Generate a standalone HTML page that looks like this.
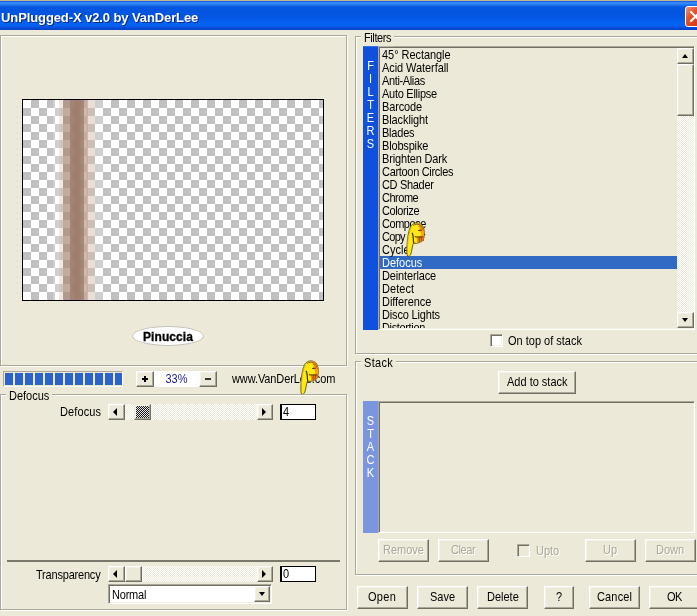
<!DOCTYPE html>
<html>
<head>
<meta charset="utf-8">
<title>UnPlugged-X v2.0 by VanDerLee</title>
<style>
html,body{margin:0;padding:0;}
body{width:697px;height:616px;overflow:hidden;background:#ece9d8;position:relative;
  font-family:"Liberation Sans",sans-serif;font-size:11px;color:#000;}
div,span{position:absolute;box-sizing:border-box;}
.t{white-space:nowrap;line-height:13px;height:13px;}
.t,.li,.vl{transform:translateY(1px) scaleY(1.08);transform-origin:0 10px;will-change:transform;}
#tt{will-change:transform;transform:scaleY(1.05);transform-origin:0 0;}
.bt{position:relative;display:inline-block;line-height:13px;vertical-align:middle;margin-top:-2px;transform:scaleY(1.08);transform-origin:50% 10px;will-change:transform;}
/* title bar */
#tb{left:0;top:0;width:697px;height:30px;
  background:linear-gradient(to bottom,#c4b68e 0px,#c4b68e 1px,#0a44d2 1px,#2e7ef4 2px,#3b8df9 3px,#2273ee 5px,#0556e1 7px,#0354de 12px,#0458e6 18px,#0562f2 24px,#0560f0 26px,#0249d6 28px,#0140c6 30px);}
#tt{left:1px;top:9px;font-weight:bold;font-size:13px;color:#fff;line-height:16px;height:16px;white-space:nowrap;
  text-shadow:1px 1px 0 #0a2a8a;letter-spacing:-0.1px;}
#cl{left:685px;top:6px;width:21px;height:21px;border:1px solid #fff;border-radius:3px;
  background:linear-gradient(135deg,#ee9478 0%,#e3532c 35%,#d53c13 75%,#c8320c 100%);}
/* bevels */
.grv{border:1px solid #aca899;box-shadow:1px 1px 0 #fff, inset 1px 1px 0 #fff;}
.btn{background:#ece9d8;border:1px solid;border-color:#fff #716f64 #716f64 #fff;box-shadow:inset -1px -1px 0 #aca899, inset 1px 1px 0 #f4f2e8;
  text-align:center;line-height:21px;white-space:nowrap;}
.btn.dis{color:#aca899;text-shadow:1px 1px 0 #fff;}
.sunk{border:1px solid;border-color:#aca899 #fff #fff #aca899;box-shadow:inset 1px 1px 0 #716f64, inset -1px -1px 0 #f1efe2;}
.dith{background:repeating-conic-gradient(#fff 0 25%,#ece9d8 0 50%) 0 0/2px 2px;}
.arr{width:0;height:0;border-style:solid;}
.cb{width:13px;height:13px;background:#fff;border:1px solid;border-color:#aca899 #fff #fff #aca899;box-shadow:inset 1px 1px 0 #716f64, inset -1px -1px 0 #f1efe2;}
.vl{font-size:11px;color:#fff;width:15px;text-align:center;line-height:13px;height:13px;}
.li{left:383px;white-space:nowrap;line-height:13px;height:13px;}
</style>
</head>
<body>
<!-- title bar -->
<div id="tb"></div>
<div id="tt">UnPlugged-X v2.0 by VanDerLee</div>
<div id="cl"><svg width="19" height="19" viewBox="0 0 19 19" style="position:absolute;left:0;top:0"><path d="M5 5 L14 14 M14 5 L5 14" stroke="#fff" stroke-width="2.2" stroke-linecap="round"/></svg></div>

<!-- left top panel (preview) -->
<div id="lp" class="grv" style="left:0;top:35px;width:347px;height:331px;"></div>
<div id="pv" style="left:22px;top:99px;width:302px;height:202px;border:1px solid #000;overflow:hidden;
  background:repeating-conic-gradient(#c0c0c0 0 25%,#fff 0 50%) 0 0/16px 16px;">
  <div style="left:30px;top:0;width:6px;height:200px;background:rgba(255,255,255,.25)"></div>
  <div style="left:36px;top:0;width:4px;height:200px;background:rgba(226,205,192,.45)"></div>
  <div style="left:40px;top:0;width:7px;height:200px;background:rgba(170,140,122,.72)"></div>
  <div style="left:47px;top:0;width:14px;height:200px;background:linear-gradient(to right,rgba(160,126,108,.93),rgba(156,120,104,.97) 50%,rgba(166,132,114,.93))"></div>
  <div style="left:61px;top:0;width:4px;height:200px;background:rgba(196,168,150,.8)"></div>
  <div style="left:65px;top:0;width:7px;height:200px;background:rgba(214,192,172,.5)"></div>
  <div style="left:72px;top:0;width:8px;height:200px;background:rgba(255,250,245,.25)"></div>
</div>
<!-- Pinuccia logo -->
<div style="left:132px;top:326px;width:72px;height:20px;border-radius:50%;background:#fff;border:1px solid #c4c2ba;"></div>
<div class="t" style="left:132px;top:330px;width:72px;text-align:center;font-weight:bold;font-size:12px;letter-spacing:0.1px;-webkit-text-stroke:0.3px #000;">Pinuccia</div>

<!-- zoom row -->
<div class="sunk" style="left:3px;top:371px;width:120px;height:16px;background:#ece9d8;box-shadow:none;"></div>
<div style="left:5px;top:373px;width:117px;height:12px;background:repeating-linear-gradient(to right,#2a63c9 0,#2a63c9 8px,#ece9d8 8px,#ece9d8 10px);"></div>
<div class="btn" style="left:136px;top:371px;width:18px;height:16px;"><div style="left:5px;top:6px;width:6px;height:2px;background:#000"></div><div style="left:7px;top:4px;width:2px;height:6px;background:#000"></div></div>
<div style="left:154px;top:371px;width:45px;height:16px;background:#fff;"></div>
<div class="t" style="left:154px;top:372px;width:45px;text-align:center;color:#1c1c8c;">33%</div>
<div class="btn" style="left:199px;top:371px;width:18px;height:16px;"><div style="left:5px;top:6px;width:6px;height:2px;background:#333"></div></div>
<div class="t" id="www" style="left:232px;top:372px;letter-spacing:-0.1px;">www.VanDerLee.com</div>

<svg class="hand" width="20" height="36" viewBox="0 0 20 36" style="position:absolute;left:300px;top:359.5px;overflow:visible">
<path d="M2.40 34.40 C1.90 34.35 1.47 33.93 1.20 33.00 C0.93 32.07 0.82 30.55 0.80 28.80 C0.78 27.05 0.97 24.57 1.10 22.50 C1.23 20.43 1.38 18.23 1.60 16.40 C1.82 14.57 2.10 12.97 2.40 11.50 C2.70 10.03 3.02 8.77 3.40 7.60 C3.78 6.43 4.20 5.37 4.70 4.50 C5.20 3.63 5.77 2.93 6.40 2.40 C7.03 1.87 7.77 1.55 8.50 1.30 C9.23 1.05 9.97 0.88 10.80 0.90 C11.63 0.92 12.65 1.05 13.50 1.40 C14.35 1.75 15.25 2.32 15.90 3.00 C16.55 3.68 17.02 4.48 17.40 5.50 C17.78 6.52 18.05 7.93 18.20 9.10 C18.35 10.27 18.35 11.40 18.30 12.50 C18.25 13.60 18.10 14.78 17.90 15.70 C17.70 16.62 17.43 17.38 17.10 18.00 C16.77 18.62 16.50 19.00 15.90 19.40 C15.30 19.80 14.42 20.07 13.50 20.40 C12.58 20.73 11.38 21.25 10.40 21.40 C9.42 21.55 8.18 21.10 7.60 21.30 C7.02 21.50 7.10 21.98 6.90 22.60 C6.70 23.22 6.58 24.08 6.40 25.00 C6.22 25.92 6.02 27.10 5.80 28.10 C5.58 29.10 5.37 30.13 5.10 31.00 C4.83 31.87 4.65 32.73 4.20 33.30 C3.75 33.87 2.90 34.45 2.40 34.40 Z" fill="#ffe914" stroke="#4a3d05" stroke-width="0.8"/>
<path d="M1.5 32.5 C0.9 28 1.6 21 2.2 16 C2.8 12 3.8 8 5.4 5" stroke="#d4b000" stroke-width="0.9" fill="none"/>
<path d="M11.30 1.20 C11.42 0.95 12.75 1.18 13.50 1.50 C14.25 1.82 15.17 2.42 15.80 3.10 C16.43 3.78 16.93 4.60 17.30 5.60 C17.67 6.60 17.87 7.95 18.00 9.10 C18.13 10.25 18.15 11.42 18.10 12.50 C18.05 13.58 17.90 14.70 17.70 15.60 C17.50 16.50 17.22 17.30 16.90 17.90 C16.58 18.50 16.35 18.83 15.80 19.20 C15.25 19.57 14.37 19.87 13.60 20.10 C12.83 20.33 11.50 20.95 11.20 20.60 C10.90 20.25 11.83 18.93 11.80 18.00 C11.77 17.07 10.55 15.63 11.00 15.00 C11.45 14.37 13.83 14.87 14.50 14.20 C15.17 13.53 15.22 11.93 15.00 11.00 C14.78 10.07 13.43 9.52 13.20 8.60 C12.97 7.68 13.67 6.43 13.60 5.50 C13.53 4.57 13.18 3.72 12.80 3.00 C12.42 2.28 11.18 1.45 11.30 1.20 Z" fill="#f9a318"/>
<path d="M10.90 15.20 C11.90 14.75 16.58 14.85 17.60 15.30 C18.62 15.75 17.30 17.25 17.00 17.90 C16.70 18.55 16.37 18.83 15.80 19.20 C15.23 19.57 14.35 19.87 13.60 20.10 C12.85 20.33 11.63 20.95 11.30 20.60 C10.97 20.25 11.67 18.90 11.60 18.00 C11.53 17.10 9.90 15.65 10.90 15.20 Z" fill="#ee7d0e"/>
<path d="M6.9 3.5 C9 2.2 11.5 2 13.3 2.6 C15.2 3.3 16.6 4.9 17.5 7" stroke="#8a4a08" stroke-width="0.85" fill="none"/>
<path d="M12.4 4 C14.4 4.4 16.4 6 17.7 9" stroke="#b85a0a" stroke-width="0.8" fill="none"/>
<path d="M12.2 8.5 L15.9 8.1" stroke="#4a2c06" stroke-width="1" fill="none"/>
<path d="M8.8 14.7 C11 15.2 14 14.7 17.6 15" stroke="#4a2c06" stroke-width="1" fill="none"/>
<path d="M13.3 15.3 L13.1 20 M15.5 15.3 L15.2 19.5" stroke="#7a3c06" stroke-width="0.7" fill="none"/>
<path d="M6 10.8 C7 12.5 7.4 14.5 7.3 16.4 C7.3 18.3 7.5 20 7.9 21.4" stroke="#3a2e04" stroke-width="1.2" fill="none"/>
</svg>
<!-- Defocus groupbox -->
<div class="grv" style="left:0;top:394px;width:347px;height:216px;"></div>
<div class="t" style="left:5.5px;top:389px;padding:0 3px;background:#ece9d8;" id="gdef">Defocus</div>
<div class="t" style="left:60.3px;top:405px;letter-spacing:0.1px;" id="ldef">Defocus</div>
<div class="btn" style="left:108px;top:404px;width:17px;height:16px;"><div class="arr" style="left:4px;top:3px;border-width:4px 4px 4px 0;border-color:transparent #000 transparent transparent;"></div></div>
<div class="dith" style="left:125px;top:404px;width:132px;height:16px;"></div>
<div class="btn" style="left:134px;top:404px;width:17px;height:16px;border-color:#ece9d8 #716f64 #716f64 #ece9d8;"></div>
<div style="left:136px;top:406px;width:13px;height:12px;background:repeating-conic-gradient(#15152a 0 25%,#ece9d8 0 50%) 0 0/2px 2px;"></div>
<div class="btn" style="left:257px;top:404px;width:16px;height:16px;"><div class="arr" style="left:4px;top:3px;border-width:4px 0 4px 4px;border-color:transparent transparent transparent #000;"></div></div>
<div style="left:280px;top:404px;width:36px;height:16px;background:#fff;border:1px solid #000;border-left-width:2px;"></div>
<div class="t" style="left:283px;top:405px;">4</div>

<!-- Transparency -->
<div style="left:7px;top:560px;width:333px;height:2px;background:#7b796c;"></div>
<div class="t" style="left:36px;top:568px;letter-spacing:-0.2px;" id="ltr">Transparency</div>
<div class="btn" style="left:108px;top:566px;width:17px;height:16px;"><div class="arr" style="left:4px;top:3px;border-width:4px 4px 4px 0;border-color:transparent #000 transparent transparent;"></div></div>
<div class="dith" style="left:125px;top:566px;width:132px;height:16px;"></div>
<div class="btn" style="left:125px;top:566px;width:17px;height:16px;"></div>
<div class="btn" style="left:257px;top:566px;width:16px;height:16px;"><div class="arr" style="left:4px;top:3px;border-width:4px 0 4px 4px;border-color:transparent transparent transparent #000;"></div></div>
<div style="left:280px;top:566px;width:36px;height:16px;background:#fff;border:1px solid #000;border-left-width:2px;"></div>
<div class="t" style="left:283px;top:567px;">0</div>
<!-- combo -->
<div class="sunk" style="left:108px;top:584px;width:164px;height:20px;background:#fff;"></div>
<div class="t" style="left:111.5px;top:588px;letter-spacing:-0.2px;">Normal</div>
<div class="btn" style="left:254px;top:586px;width:16px;height:16px;"><div class="arr" style="left:4px;top:5px;border-width:4px 3.5px 0 3.5px;border-color:#000 transparent transparent transparent;"></div></div>

<!-- Filters groupbox -->
<div class="grv" style="left:355px;top:36px;width:350px;height:318px;"></div>
<div class="t" style="left:361px;top:31px;padding:0 3px;background:#ece9d8;letter-spacing:-0.4px;" id="gfil">Filters</div>
<div style="left:363px;top:46px;width:15px;height:284px;background:#0f50dc;"></div>
<div class="sunk" style="left:378px;top:46px;width:317px;height:284px;"></div>
<div class="vl" style="left:363px;top:59px;">F</div>
<div class="vl" style="left:363px;top:72px;">I</div>
<div class="vl" style="left:363px;top:85px;">L</div>
<div class="vl" style="left:363px;top:98px;">T</div>
<div class="vl" style="left:363px;top:111px;">E</div>
<div class="vl" style="left:363px;top:124px;">R</div>
<div class="vl" style="left:363px;top:137px;">S</div>
<div id="list" style="left:380px;top:48px;width:297px;height:280px;overflow:hidden;">
  <div style="left:0;top:208px;width:297px;height:13px;background:#316ac5;"></div>
  <div class="li" style="left:1.8px;top:0px;letter-spacing:-0.05px;">45&deg; Rectangle</div>
  <div class="li" style="left:1.8px;top:13px;letter-spacing:-0.07px;">Acid Waterfall</div>
  <div class="li" style="left:1.8px;top:26px;letter-spacing:-0.37px;">Anti-Alias</div>
  <div class="li" style="left:1.8px;top:39px;letter-spacing:-0.27px;">Auto Ellipse</div>
  <div class="li" style="left:1.8px;top:52px;letter-spacing:-0.14px;">Barcode</div>
  <div class="li" style="left:1.8px;top:65px;letter-spacing:-0.1px;">Blacklight</div>
  <div class="li" style="left:1.8px;top:78px;letter-spacing:-0.22px;">Blades</div>
  <div class="li" style="left:1.8px;top:91px;letter-spacing:-0.17px;">Blobspike</div>
  <div class="li" style="left:1.8px;top:104px;letter-spacing:-0.16px;">Brighten Dark</div>
  <div class="li" style="left:1.8px;top:117px;letter-spacing:-0.31px;">Cartoon Circles</div>
  <div class="li" style="left:1.8px;top:130px;letter-spacing:-0.32px;">CD Shader</div>
  <div class="li" style="left:1.8px;top:143px;letter-spacing:-0.49px;">Chrome</div>
  <div class="li" style="left:1.8px;top:156px;letter-spacing:-0.4px;">Colorize</div>
  <div class="li" style="left:1.8px;top:169px;letter-spacing:-0.46px;">Compose</div>
  <div class="li" style="left:1.8px;top:182px;letter-spacing:-0.7px;">Copy Star</div>
  <div class="li" style="left:1.8px;top:195px;letter-spacing:0px;">Cycle</div>
  <div class="li" style="left:1.8px;top:208px;color:#fff;letter-spacing:-0.01px;">Defocus</div>
  <div class="li" style="left:1.8px;top:221px;letter-spacing:-0.14px;">Deinterlace</div>
  <div class="li" style="left:1.8px;top:234px;letter-spacing:0.04px;">Detect</div>
  <div class="li" style="left:1.8px;top:247px;letter-spacing:-0.06px;">Difference</div>
  <div class="li" style="left:1.8px;top:260px;letter-spacing:-0.17px;">Disco Lights</div>
  <div class="li" style="left:1.8px;top:273px;letter-spacing:-0.35px;">Distortion</div>
</div>
<!-- scrollbar -->
<div class="dith" style="left:677px;top:48px;width:17px;height:280px;"></div>
<div class="btn" style="left:677px;top:48px;width:17px;height:16px;"><div class="arr" style="left:4px;top:5px;border-width:0 3.5px 4px 3.5px;border-color:transparent transparent #000 transparent;"></div></div>
<div class="btn" style="left:677px;top:64px;width:17px;height:52px;"></div>
<div class="btn" style="left:677px;top:312px;width:17px;height:16px;"><div class="arr" style="left:4px;top:5px;border-width:4px 3.5px 0 3.5px;border-color:#000 transparent transparent transparent;"></div></div>
<svg class="hand" width="20" height="36" viewBox="0 0 20 36" style="position:absolute;left:406px;top:221.5px;overflow:visible">
<path d="M2.40 34.40 C1.90 34.35 1.47 33.93 1.20 33.00 C0.93 32.07 0.82 30.55 0.80 28.80 C0.78 27.05 0.97 24.57 1.10 22.50 C1.23 20.43 1.38 18.23 1.60 16.40 C1.82 14.57 2.10 12.97 2.40 11.50 C2.70 10.03 3.02 8.77 3.40 7.60 C3.78 6.43 4.20 5.37 4.70 4.50 C5.20 3.63 5.77 2.93 6.40 2.40 C7.03 1.87 7.77 1.55 8.50 1.30 C9.23 1.05 9.97 0.88 10.80 0.90 C11.63 0.92 12.65 1.05 13.50 1.40 C14.35 1.75 15.25 2.32 15.90 3.00 C16.55 3.68 17.02 4.48 17.40 5.50 C17.78 6.52 18.05 7.93 18.20 9.10 C18.35 10.27 18.35 11.40 18.30 12.50 C18.25 13.60 18.10 14.78 17.90 15.70 C17.70 16.62 17.43 17.38 17.10 18.00 C16.77 18.62 16.50 19.00 15.90 19.40 C15.30 19.80 14.42 20.07 13.50 20.40 C12.58 20.73 11.38 21.25 10.40 21.40 C9.42 21.55 8.18 21.10 7.60 21.30 C7.02 21.50 7.10 21.98 6.90 22.60 C6.70 23.22 6.58 24.08 6.40 25.00 C6.22 25.92 6.02 27.10 5.80 28.10 C5.58 29.10 5.37 30.13 5.10 31.00 C4.83 31.87 4.65 32.73 4.20 33.30 C3.75 33.87 2.90 34.45 2.40 34.40 Z" fill="#ffe914" stroke="#4a3d05" stroke-width="0.8"/>
<path d="M1.5 32.5 C0.9 28 1.6 21 2.2 16 C2.8 12 3.8 8 5.4 5" stroke="#d4b000" stroke-width="0.9" fill="none"/>
<path d="M11.30 1.20 C11.42 0.95 12.75 1.18 13.50 1.50 C14.25 1.82 15.17 2.42 15.80 3.10 C16.43 3.78 16.93 4.60 17.30 5.60 C17.67 6.60 17.87 7.95 18.00 9.10 C18.13 10.25 18.15 11.42 18.10 12.50 C18.05 13.58 17.90 14.70 17.70 15.60 C17.50 16.50 17.22 17.30 16.90 17.90 C16.58 18.50 16.35 18.83 15.80 19.20 C15.25 19.57 14.37 19.87 13.60 20.10 C12.83 20.33 11.50 20.95 11.20 20.60 C10.90 20.25 11.83 18.93 11.80 18.00 C11.77 17.07 10.55 15.63 11.00 15.00 C11.45 14.37 13.83 14.87 14.50 14.20 C15.17 13.53 15.22 11.93 15.00 11.00 C14.78 10.07 13.43 9.52 13.20 8.60 C12.97 7.68 13.67 6.43 13.60 5.50 C13.53 4.57 13.18 3.72 12.80 3.00 C12.42 2.28 11.18 1.45 11.30 1.20 Z" fill="#f9a318"/>
<path d="M10.90 15.20 C11.90 14.75 16.58 14.85 17.60 15.30 C18.62 15.75 17.30 17.25 17.00 17.90 C16.70 18.55 16.37 18.83 15.80 19.20 C15.23 19.57 14.35 19.87 13.60 20.10 C12.85 20.33 11.63 20.95 11.30 20.60 C10.97 20.25 11.67 18.90 11.60 18.00 C11.53 17.10 9.90 15.65 10.90 15.20 Z" fill="#ee7d0e"/>
<path d="M6.9 3.5 C9 2.2 11.5 2 13.3 2.6 C15.2 3.3 16.6 4.9 17.5 7" stroke="#8a4a08" stroke-width="0.85" fill="none"/>
<path d="M12.4 4 C14.4 4.4 16.4 6 17.7 9" stroke="#b85a0a" stroke-width="0.8" fill="none"/>
<path d="M12.2 8.5 L15.9 8.1" stroke="#4a2c06" stroke-width="1" fill="none"/>
<path d="M8.8 14.7 C11 15.2 14 14.7 17.6 15" stroke="#4a2c06" stroke-width="1" fill="none"/>
<path d="M13.3 15.3 L13.1 20 M15.5 15.3 L15.2 19.5" stroke="#7a3c06" stroke-width="0.7" fill="none"/>
<path d="M6 10.8 C7 12.5 7.4 14.5 7.3 16.4 C7.3 18.3 7.5 20 7.9 21.4" stroke="#3a2e04" stroke-width="1.2" fill="none"/>
</svg>
<!-- on top of stack -->
<div class="cb" style="left:490px;top:334px;"></div>
<div class="t" style="left:508px;top:334px;" id="ots">On top of stack</div>

<!-- Stack groupbox -->
<div class="grv" style="left:355px;top:361px;width:350px;height:214px;"></div>
<div class="t" style="left:361px;top:356px;padding:0 3px;background:#ece9d8;letter-spacing:0.3px;" id="gst">Stack</div>
<div class="btn" style="left:498px;top:371px;width:78px;height:23px;" id="ats"><span class="bt">Add to stack</span></div>
<div style="left:363px;top:401px;width:15px;height:132px;background:#7b96df;"></div>
<div class="sunk" style="left:378px;top:401px;width:317px;height:132px;"></div>
<div class="vl" style="left:363px;top:414px;">S</div>
<div class="vl" style="left:363px;top:427px;">T</div>
<div class="vl" style="left:363px;top:440px;">A</div>
<div class="vl" style="left:363px;top:453px;">C</div>
<div class="vl" style="left:363px;top:466px;">K</div>
<div class="btn dis" style="left:378px;top:539px;width:51px;height:23px;"><span class="bt">Remove</span></div>
<div class="btn dis" style="left:438px;top:539px;width:51px;height:23px;letter-spacing:-0.4px;"><span class="bt">Clear</span></div>
<div class="cb" style="left:517px;top:544px;background:#ece9d8;"></div>
<div class="t" style="left:535.5px;top:544px;color:#aca899;text-shadow:1px 1px 0 #fff;">Upto</div>
<div class="btn dis" style="left:585px;top:539px;width:51px;height:23px;"><span class="bt">Up</span></div>
<div class="btn dis" style="left:645px;top:539px;width:51px;height:23px;"><span class="bt">Down</span></div>

<!-- bottom buttons -->
<div class="btn" style="left:357px;top:586px;width:51px;height:23px;letter-spacing:0.3px;" id="bopen"><span class="bt">Open</span></div>
<div class="btn" style="left:417px;top:586px;width:51px;height:23px;"><span class="bt">Save</span></div>
<div class="btn" style="left:477px;top:586px;width:51px;height:23px;"><span class="bt">Delete</span></div>
<div class="btn" style="left:544px;top:586px;width:30px;height:23px;"><span class="bt">?</span></div>
<div class="btn" style="left:589px;top:586px;width:51px;height:23px;letter-spacing:0.15px;"><span class="bt">Cancel</span></div>
<div class="btn" style="left:649px;top:586px;width:51px;height:23px;letter-spacing:-0.6px;"><span class="bt">OK</span></div>

</body>
</html>
